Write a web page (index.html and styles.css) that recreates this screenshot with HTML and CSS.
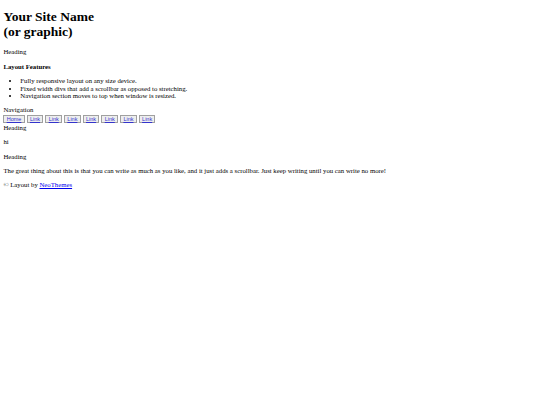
FILE: index.html
```html
<!DOCTYPE html>
<html>
<head>
<meta charset="utf-8">
<link rel="stylesheet" href="styles.css">
</head>
<body>
<div class="header">
<h1 class="site-name">Your Site Name<br>(or graphic)</h1>
</div>
<div class="sidebar">
<p class="heading">Heading</p>
<p class="features-title">Layout Features</p>
<ul class="features">
<li>Fully responsive layout on any size device.</li>
<li>Fixed width divs that add a scrollbar as opposed to stretching.</li>
<li>Navigation section moves to top when window is resized.</li>
</ul>
</div>
<div class="nav-section">
<div class="nav-label">Navigation</div>
<div class="nav">
<a class="nav-btn" href="#">Home</a><a class="nav-btn" href="#">Link</a><a class="nav-btn" href="#">Link</a><a class="nav-btn" href="#">Link</a><a class="nav-btn" href="#">Link</a><a class="nav-btn" href="#">Link</a><a class="nav-btn" href="#">Link</a><a class="nav-btn" href="#">Link</a>
</div>
<div class="nav-heading">Heading</div>
<p class="text">hi</p>
</div>
<div class="content">
<p class="heading">Heading</p>
<p class="text">The great thing about this is that you can write as much as you like, and it just adds a scrollbar. Just keep writing until you can write no more!</p>
</div>
<p class="footer">© Layout by <a class="footer-link" href="#">NeoThemes</a></p>
</body>
</html>
```
FILE: styles.css
```css
html {
  background: #fff;
}
body {
  margin: 3.4px;
  font-family: "Liberation Serif", "Times New Roman", serif;
  font-size: 6.75px;
  line-height: 1.11;
  color: #000;
}
.site-name {
  font-size: 2em;
  font-weight: bold;
  margin: 5.75px 0 0.67em;
}
.heading, .text, .footer {
  margin: 1em 0;
}
.features-title {
  font-weight: bold;
  margin: 1.1em 0 1em;
}
.features {
  margin: 1em 0;
  padding-left: 2.5em;
}
.nav {
  display: flex;
  gap: 2px;
  margin: 1.2px 0 1px;
}
.nav-btn {
  font-family: "Liberation Sans", Arial, sans-serif;
  font-size: 5.5px;
  line-height: 6px;
  color: #3333cc;
  background: #eeeeee;
  border: 1px solid #a0a0a0;
  padding: 0 2.3px;
}
.footer-link {
  color: #0000ee;
}
```
